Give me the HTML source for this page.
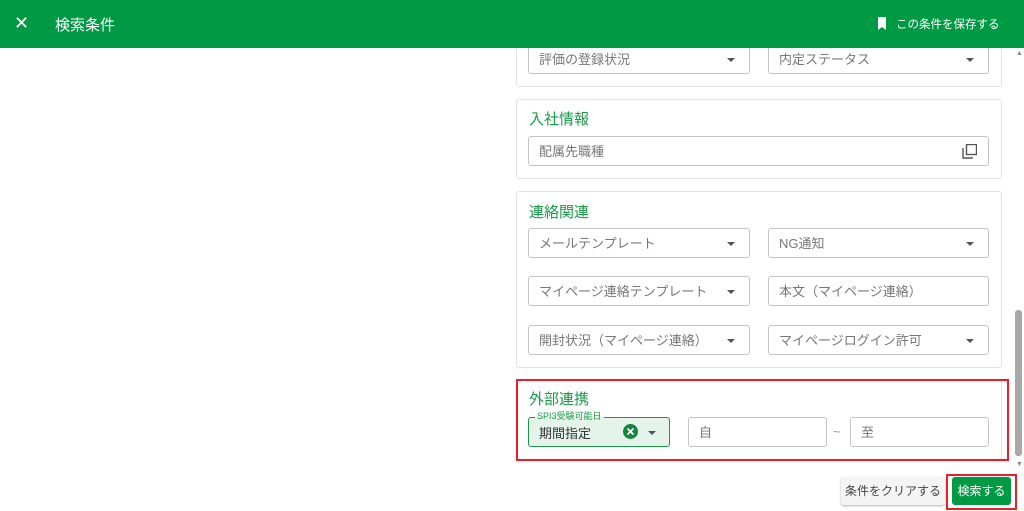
<!DOCTYPE html>
<html><head><meta charset="utf-8"><style>
*{box-sizing:border-box;margin:0;padding:0}
body{width:1024px;height:511px;overflow:hidden;background:#fff;font-family:"Liberation Sans","Noto Sans CJK JP",sans-serif;position:relative;color:#333}
.hdr{position:absolute;left:0;top:0;width:1024px;height:48px;background:#009a44;color:#fff;z-index:5}
.abs{position:absolute}
.panel{position:absolute;left:516px;width:486px;border:1px solid #e3e3e3;border-radius:3px;background:#fff}
.ttl{position:absolute;color:#1a9a48;font-size:15px}
.f{position:absolute;height:30px;border:1px solid #c4c4c4;border-radius:3px;font-size:13px;color:#777;padding-left:10px;line-height:30px;background:#fff}
.arr{position:absolute;right:14px;top:13px;width:0;height:0;border-left:4px solid transparent;border-right:4px solid transparent;border-top:4px solid #555}
</style></head><body>
<div class="hdr">
<div class="abs" style="left:14px;top:13px;font-size:18px">✕</div>
<div class="abs" style="left:55px;top:14px;font-size:15px">検索条件</div>
<svg class="abs" style="left:877px;top:17px" width="10" height="13"><path d="M1 0h8v13l-4-3-4 3z" fill="#fff"/></svg>
<div class="abs" style="left:896px;top:16px;font-size:11.5px">この条件を保存する</div>
</div>
<div class="panel" style="top:30px;height:57px"></div>
<div class="f" style="left:528px;top:44px;width:222px">評価の登録状況<span class="arr"></span></div>
<div class="f" style="left:768px;top:44px;width:221px">内定ステータス<span class="arr"></span></div>

<div class="panel" style="top:99px;height:80px"></div>
<div class="ttl" style="left:529px;top:108px">入社情報</div>
<div class="f" style="left:528px;top:136px;width:461px">配属先職種
<svg class="abs" style="right:11px;top:7px" width="15" height="15"><rect x="4.5" y="0.5" width="10" height="10" fill="none" stroke="#555" stroke-width="1.4"/><path d="M1 4v10h10" fill="none" stroke="#555" stroke-width="1.4"/></svg></div>

<div class="panel" style="top:191px;height:177px"></div>
<div class="ttl" style="left:529px;top:201px">連絡関連</div>
<div class="f" style="left:528px;top:228px;width:222px">メールテンプレート<span class="arr"></span></div>
<div class="f" style="left:768px;top:228px;width:221px">NG通知<span class="arr"></span></div>
<div class="f" style="left:528px;top:276px;width:222px">マイページ連絡テンプレート<span class="arr"></span></div>
<div class="f" style="left:768px;top:276px;width:221px">本文（マイページ連絡）</div>
<div class="f" style="left:528px;top:325px;width:222px">開封状況（マイページ連絡）<span class="arr"></span></div>
<div class="f" style="left:768px;top:325px;width:221px">マイページログイン許可<span class="arr"></span></div>

<div class="panel" style="top:380px;height:80px"></div>
<div class="abs" style="left:516px;top:379px;width:493px;height:82px;border:2px solid #e8202a"></div>
<div class="ttl" style="left:529px;top:388px">外部連携</div>
<div class="f" style="left:528px;top:417px;width:142px;background:#e5f4ea;border-color:#1a9a48;color:#333;line-height:32px">期間指定
<svg class="abs" style="left:94px;top:6px" width="15" height="15"><circle cx="7.5" cy="7.5" r="7.5" fill="#12883c"/><path d="M4.5 4.5l6 6M10.5 4.5l-6 6" stroke="#fff" stroke-width="1.8"/></svg>
<span class="arr" style="top:13px;right:13px"></span></div>
<div class="abs" style="left:535px;top:411px;font-size:9px;color:#1a9a48;padding:0 2px;line-height:11px;background:linear-gradient(#fff 50%,#e5f4ea 50%)">SPI3受験可能日</div>
<div class="f" style="left:688px;top:417px;width:139px">自</div>
<div class="abs" style="left:833px;top:424px;font-size:13px;color:#999">~</div>
<div class="f" style="left:850px;top:417px;width:139px">至</div>

<div class="abs" style="left:1016px;top:50px;font-size:7px;color:#888">▲</div>
<div class="abs" style="left:1015px;top:310px;width:7px;height:146px;background:#a8a8a8;border-radius:3px"></div>
<div class="abs" style="left:1016px;top:461px;font-size:7px;color:#888">▼</div>

<div class="abs" style="left:841px;top:477px;width:104px;height:28px;background:#f4f4f4;border-radius:3px;box-shadow:0 1px 2px rgba(0,0,0,.3);font-size:12px;color:#444;line-height:28px;text-align:center">条件をクリアする</div>
<div class="abs" style="left:946px;top:474px;width:71px;height:36px;border:2px solid #e8202a"></div>
<div class="abs" style="left:952px;top:477px;width:59px;height:28px;background:#009a44;border-radius:3px;font-size:12px;color:#fff;line-height:28px;text-align:center">検索する</div>
</body></html>
